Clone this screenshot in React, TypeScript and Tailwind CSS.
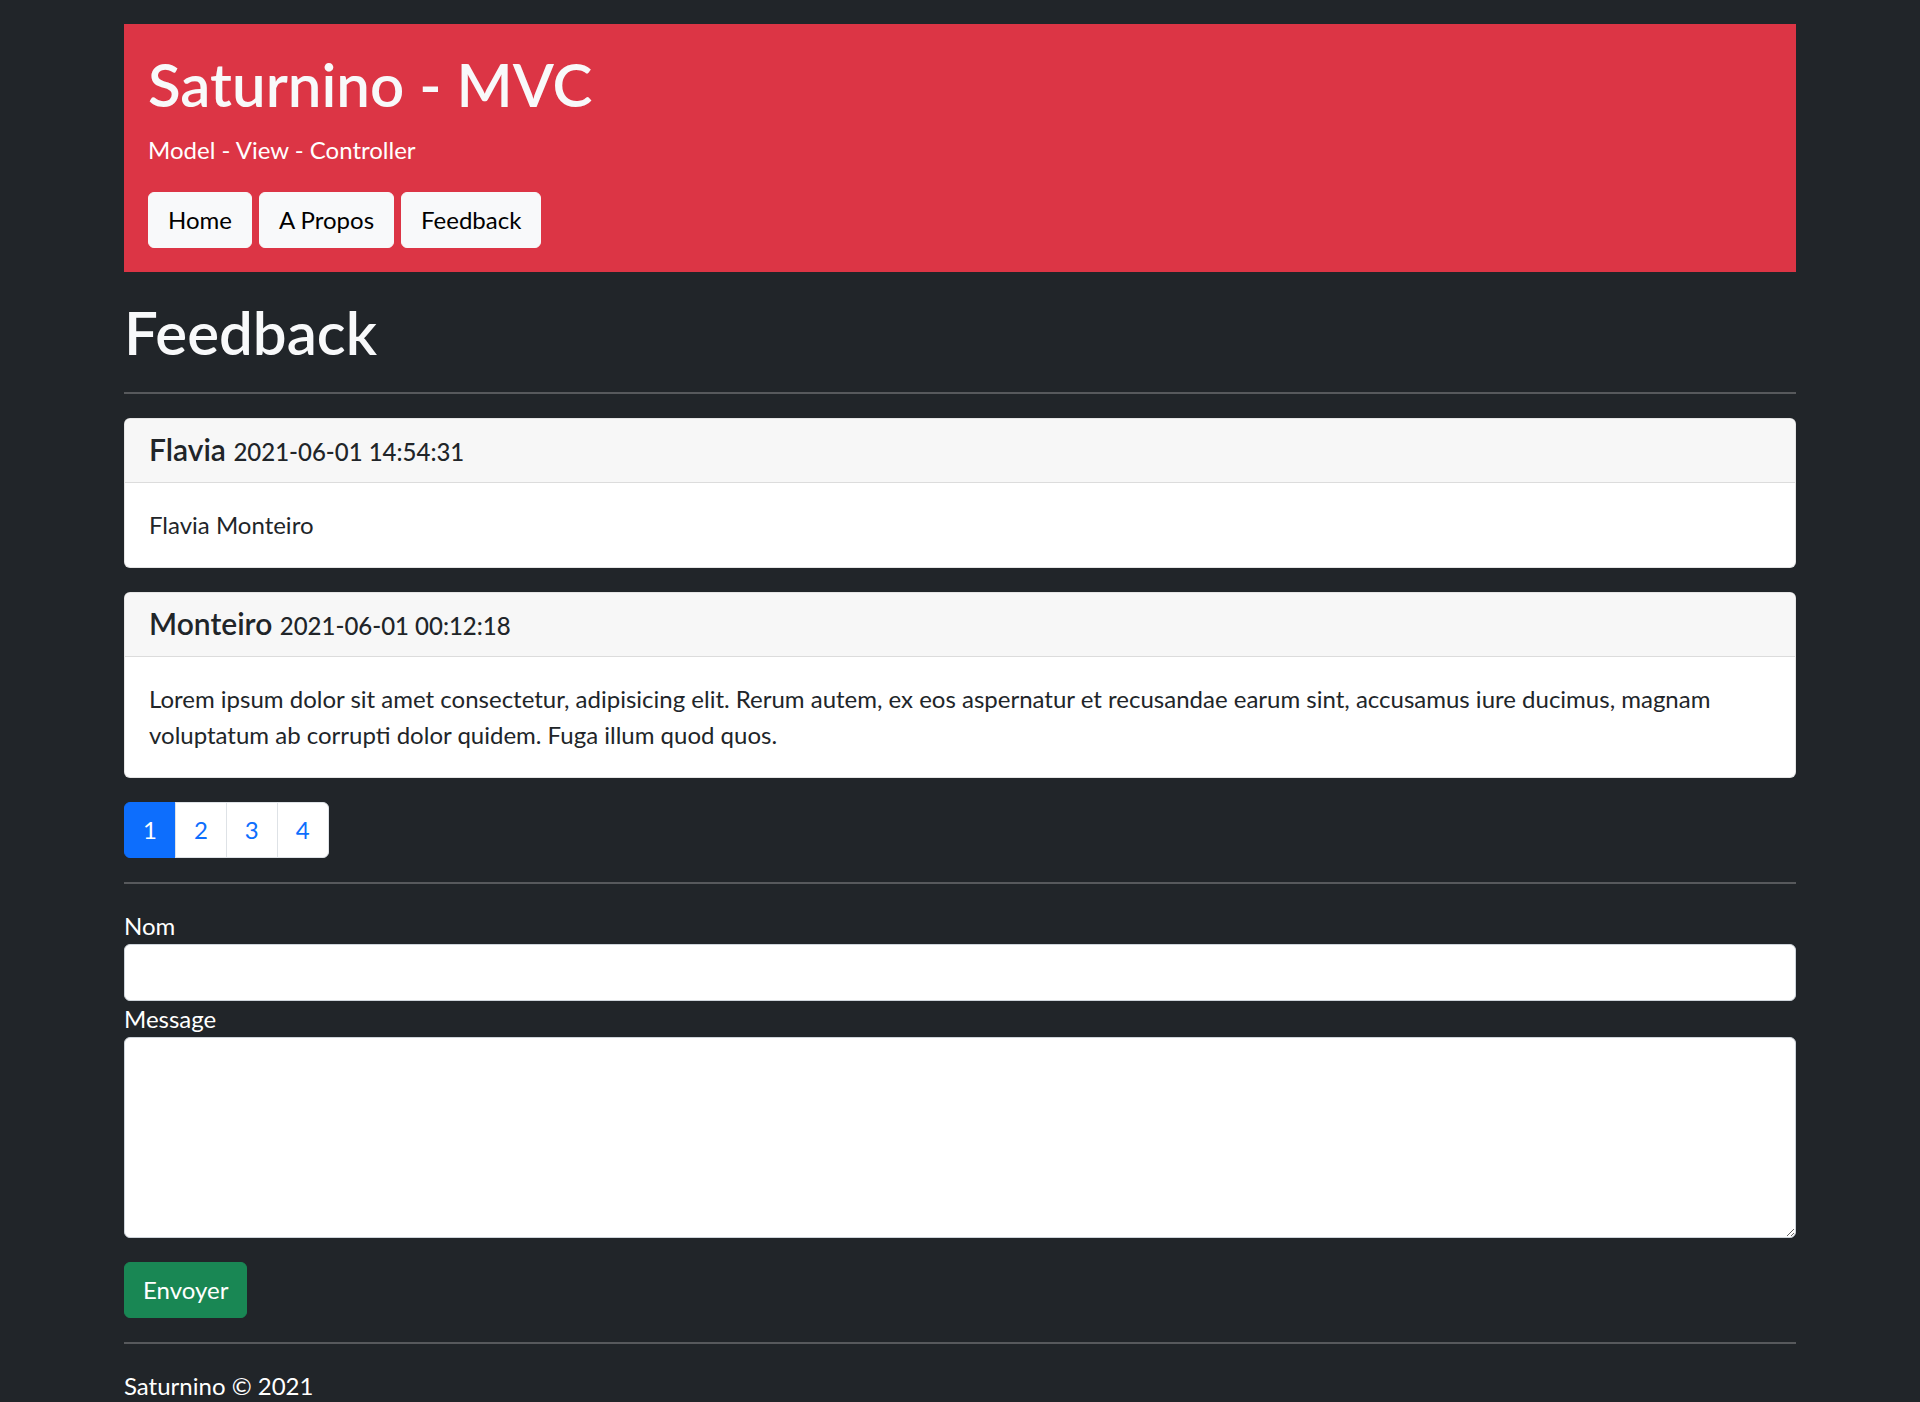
import React from "react";

interface FeedbackItem {
    nom: string;
    date: string;
    message: string;
}

const feedbacks: FeedbackItem[] = [
    { nom: "Flavia", date: "2021-06-01 14:54:31", message: "Flavia Monteiro" },
    {
        nom: "Monteiro",
        date: "2021-06-01 00:12:18",
        message:
            "Lorem ipsum dolor sit amet consectetur, adipisicing elit. Rerum autem, ex eos aspernatur et recusandae earum sint, accusamus iure ducimus, magnam voluptatum ab corrupti dolor quidem. Fuga illum quod quos.",
    },
];

const Divider: React.FC<{ className?: string }> = ({ className }) => (
    <div className={`h-[2px] w-full bg-[#57595c] ${className ?? ""}`} />
);

const FeedbackCard: React.FC<{ item: FeedbackItem }> = ({ item }) => (
    <div className="mb-6 overflow-hidden rounded-md border border-black/10 bg-white text-[#212529]">
        <div className="border-b-[1.5px] border-[#dcdcdc] bg-[#f7f7f7] px-6 py-3">
            <h5 className="text-[30px] font-semibold leading-9">
                {item.nom} <span className="text-[24px] font-medium">{item.date}</span>
            </h5>
        </div>
        <div className="p-6">
            <p className="text-2xl leading-9">{item.message}</p>
        </div>
    </div>
);

const App: React.FC = () => {
    const pages = [1, 2, 3, 4];

    return (
        <div className="min-h-screen bg-[#212529] pb-10 font-['Lato','Noto_Sans',sans-serif] text-[#f8f9fa]">
            <div className="mx-auto w-[1672px] pt-6">
                {/* header */}
                <header className="bg-[#dc3545] p-6">
                    <h1 className="mb-3 text-[60px] font-semibold leading-[72px] text-[#f8f9fa]">
                        Saturnino - MVC
                    </h1>
                    <p className="mb-6 text-2xl leading-9 text-white">Model - View - Controller</p>
                    <nav className="flex gap-[7px]">
                        {["Home", "A Propos", "Feedback"].map((l) => (
                            <a
                                key={l}
                                href="#"
                                className="rounded-md border-[1.5px] border-[#f8f9fa] bg-[#f8f9fa] px-[19px] py-[9px] text-2xl leading-9 text-black"
                            >
                                {l}
                            </a>
                        ))}
                    </nav>
                </header>

                <h1 className="mt-6 text-[60px] font-semibold leading-[72px]">Feedback</h1>
                <Divider className="mt-6 mb-6" />

                {feedbacks.map((f) => (
                    <FeedbackCard key={f.nom} item={f} />
                ))}

                {/* pagination */}
                <ul className="mb-6 flex">
                    {pages.map((p, i) => (
                        <li key={p}>
                            <a
                                href="#"
                                className={`-ml-px block border-[1.5px] px-[18px] py-[9px] text-2xl leading-9 ${
                                    i === 0
                                        ? "ml-0 rounded-l-md border-[#0d6efd] bg-[#0d6efd] text-white"
                                        : "border-[#dee2e6] bg-white text-[#0d6efd]"
                                } ${i === pages.length - 1 ? "rounded-r-md" : ""}`}
                            >
                                {p}
                            </a>
                        </li>
                    ))}
                </ul>
                <Divider className="mb-6" />

                {/* form */}
                <form onSubmit={(e) => e.preventDefault()}>
                    <div>
                        <label className="block text-2xl leading-9 text-white">Nom</label>
                        <input
                            type="text"
                            className="block h-[57px] w-full rounded-md border-[1.5px] border-[#ced4da] bg-white px-[18px] text-2xl text-[#212529] outline-none"
                        />
                    </div>
                    <div>
                        <label className="block text-2xl leading-9 text-white">Message</label>
                        <textarea className="block h-[201px] w-full rounded-md border-[1.5px] border-[#ced4da] bg-white px-[18px] py-[9px] text-2xl text-[#212529] outline-none" />
                    </div>
                    <button
                        type="submit"
                        className="mt-6 rounded-md border-[1.5px] border-[#198754] bg-[#198754] px-[18px] py-[9px] text-2xl leading-9 text-white"
                    >
                        Envoyer
                    </button>
                </form>

                <Divider className="my-6" />
                <footer className="text-2xl leading-9 text-white">Saturnino © 2021</footer>
            </div>
        </div>
    );
};

export default App;
